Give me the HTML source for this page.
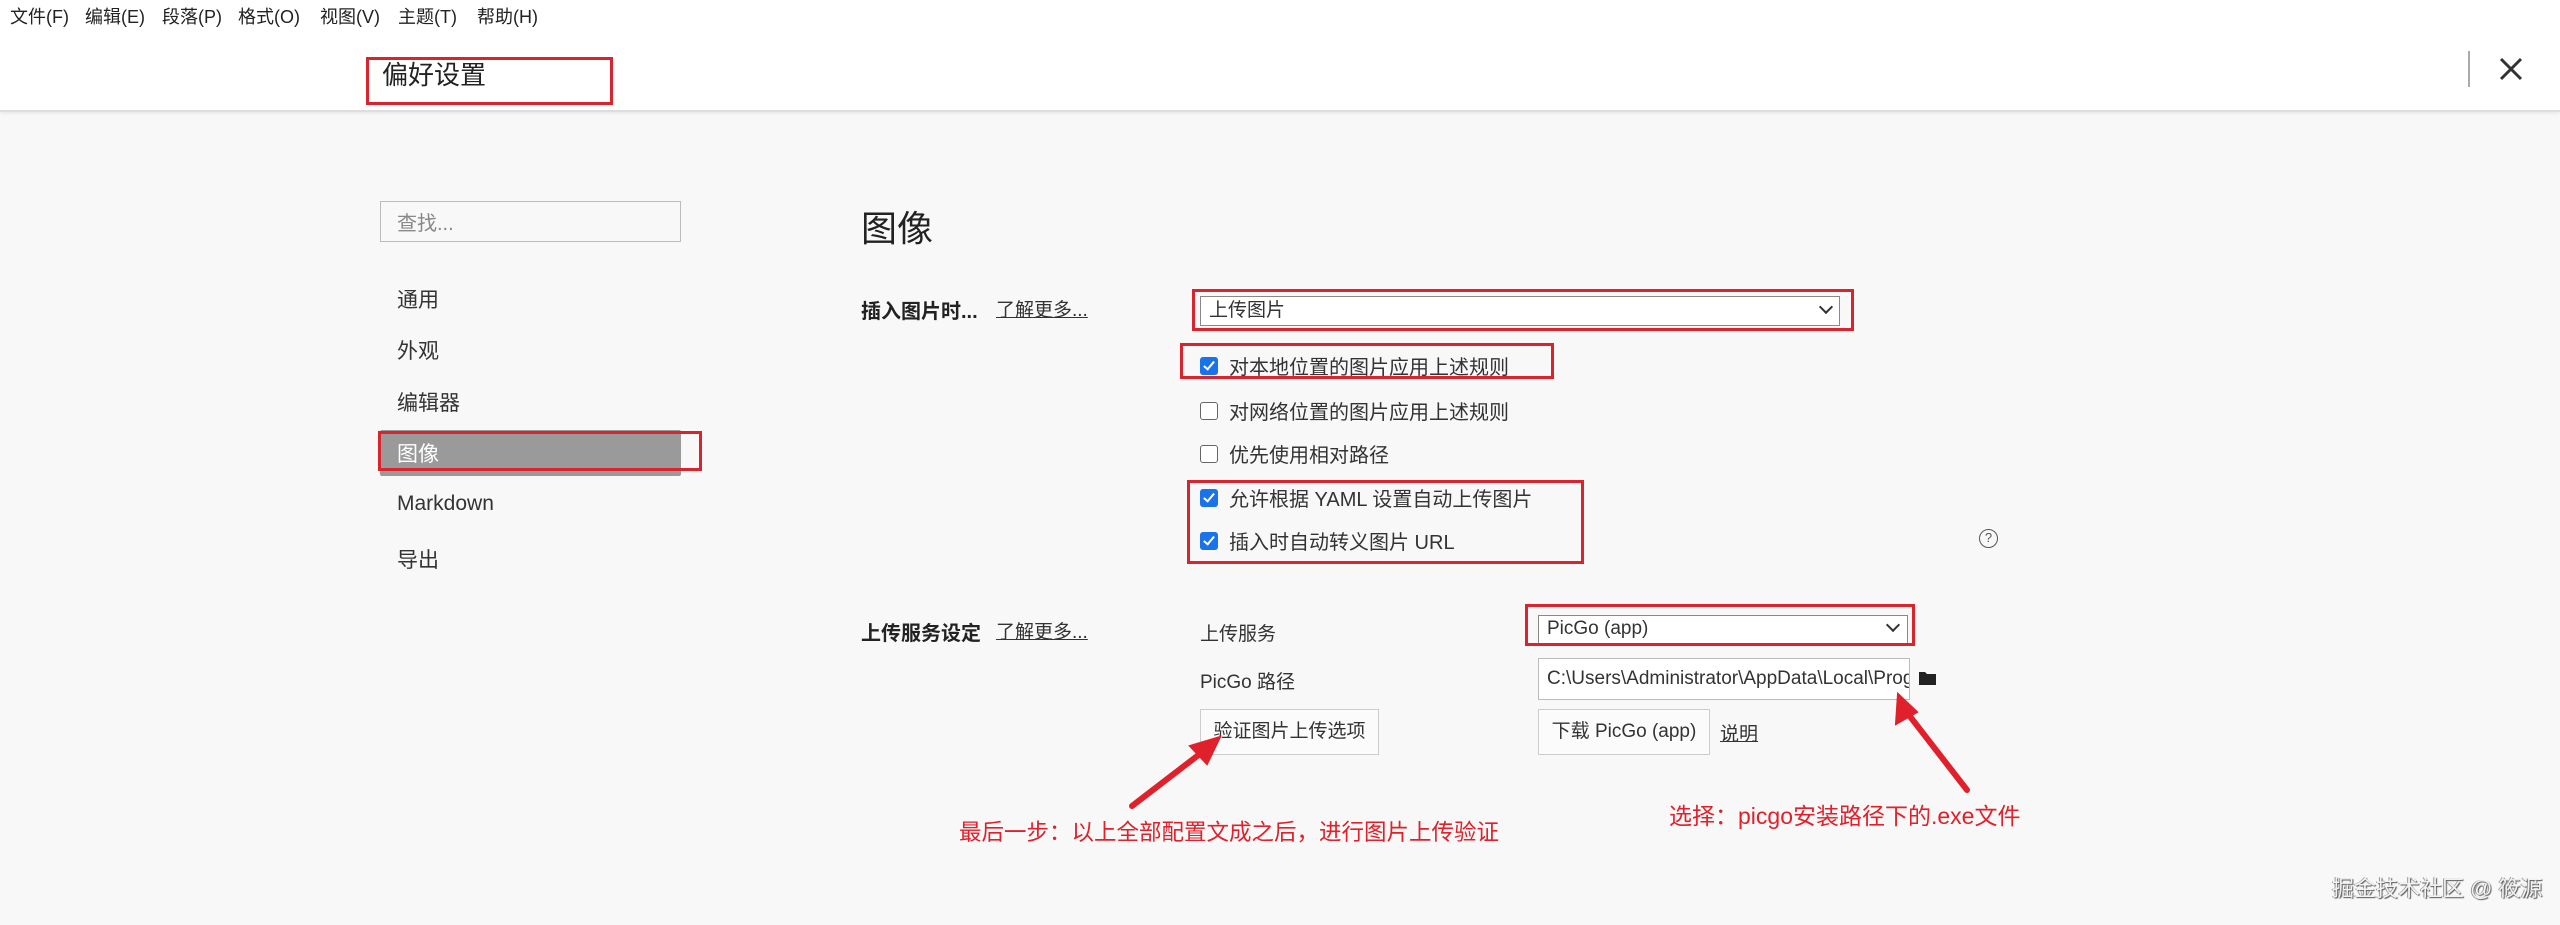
<!DOCTYPE html>
<html><head><meta charset="utf-8"><style>
*{margin:0;padding:0;box-sizing:border-box}
body{width:2560px;height:925px;overflow:hidden;background:#f8f8f8;font-family:"Liberation Sans","Noto Sans CJK SC",sans-serif;color:#333;position:relative}
.a{position:absolute;white-space:nowrap}
.hdr{position:absolute;left:0;top:0;width:2560px;height:112px;background:#fff;border-bottom:2px solid #ddd;box-shadow:0 2px 3px rgba(0,0,0,.06)}
.menu{font-size:18px;top:3px;color:#222}
.rb{position:absolute;border:3px solid #d9232d}
.nav{font-size:21px;left:397px;color:#333}
.cb{position:absolute;left:1200px;width:18px;height:18px;border-radius:3px}
.on{background:#1a73e8}
.on::after{content:"";position:absolute;left:6px;top:2px;width:4px;height:9px;border:solid #fff;border-width:0 2.5px 2.5px 0;transform:rotate(40deg)}
.off{border:1.5px solid #666;background:#fff}
.ct{font-size:20px;left:1229px}
.sel{position:absolute;background:#fff;border:1.5px solid #888;font-size:19px;padding-left:8px;line-height:28px}
.chev{position:absolute;width:10px;height:10px;border:solid #333;border-width:0 2px 2px 0;transform:rotate(45deg)}
.btn{position:absolute;background:#fbfbfb;border:1.5px solid #ccc;font-size:19px;text-align:center;line-height:43px}
.red{color:#e0202a}
</style></head><body>
<div class="hdr"></div>
<div class="a menu" style="left:10px">文件(F)</div>
<div class="a menu" style="left:85px">编辑(E)</div>
<div class="a menu" style="left:162px">段落(P)</div>
<div class="a menu" style="left:238px">格式(O)</div>
<div class="a menu" style="left:320px">视图(V)</div>
<div class="a menu" style="left:398px">主题(T)</div>
<div class="a menu" style="left:477px">帮助(H)</div>
<div class="a" style="left:382px;top:55px;font-size:26px;color:#222">偏好设置</div>
<div class="rb" style="left:366px;top:57px;width:247px;height:48px"></div>
<div class="a" style="left:2468px;top:51px;width:2px;height:36px;background:#aaa"></div>
<svg class="a" style="left:2499px;top:57px" width="24" height="24" viewBox="0 0 24 24"><path d="M2 2L22 22M22 2L2 22" stroke="#333" stroke-width="3"/></svg>

<div class="a" style="left:380px;top:201px;width:301px;height:41px;border:1.5px solid #bbb;background:#f8f8f8"></div>
<div class="a" style="left:397px;top:207px;font-size:20px;color:#888">查找...</div>
<div class="a nav" style="top:284px">通用</div>
<div class="a nav" style="top:335px">外观</div>
<div class="a nav" style="top:387px">编辑器</div>
<div class="a" style="left:380px;top:430px;width:301px;height:46px;background:#9a9a9a;border-radius:2px"></div>
<div class="a nav" style="top:438px;color:#fff">图像</div>
<div class="rb" style="left:378px;top:431px;width:324px;height:40px"></div>
<div class="a nav" style="top:492px">Markdown</div>
<div class="a nav" style="top:544px">导出</div>

<div class="a" style="left:861px;top:200px;font-size:36px;color:#222">图像</div>
<div class="a" style="left:861px;top:295px;font-size:20px;font-weight:bold;color:#222">插入图片时...</div>
<div class="a" style="left:996px;top:295px;font-size:19px;text-decoration:underline">了解更多...</div>
<div class="sel" style="left:1200px;top:296px;width:640px;height:30px">上传图片</div>
<div class="chev" style="left:1821px;top:302px"></div>
<div class="rb" style="left:1192px;top:289px;width:662px;height:42px"></div>

<div class="cb on" style="top:357px"></div><div class="a ct" style="top:351px">对本地位置的图片应用上述规则</div>
<div class="rb" style="left:1180px;top:343px;width:374px;height:36px"></div>
<div class="cb off" style="top:402px"></div><div class="a ct" style="top:396px">对网络位置的图片应用上述规则</div>
<div class="cb off" style="top:445px"></div><div class="a ct" style="top:439px">优先使用相对路径</div>
<div class="cb on" style="top:489px"></div><div class="a ct" style="top:483px">允许根据 YAML 设置自动上传图片</div>
<div class="cb on" style="top:532px"></div><div class="a ct" style="top:526px">插入时自动转义图片 URL</div>
<div class="rb" style="left:1187px;top:480px;width:397px;height:84px"></div>
<div class="a" style="left:1979px;top:529px;width:19px;height:19px;border:1.5px solid #555;border-radius:50%;font-size:13px;text-align:center;line-height:16px;color:#555">?</div>

<div class="a" style="left:861px;top:617px;font-size:20px;font-weight:bold;color:#222">上传服务设定</div>
<div class="a" style="left:996px;top:617px;font-size:19px;text-decoration:underline">了解更多...</div>
<div class="a" style="left:1200px;top:619px;font-size:19px">上传服务</div>
<div class="sel" style="left:1538px;top:615px;width:370px;height:29px;line-height:26px">PicGo (app)</div>
<div class="chev" style="left:1888px;top:620px"></div>
<div class="rb" style="left:1525px;top:604px;width:390px;height:42px"></div>
<div class="a" style="left:1200px;top:667px;font-size:19px">PicGo 路径</div>
<div class="a" style="left:1538px;top:658px;width:372px;height:42px;background:#fff;border:1.5px solid #bbb;overflow:hidden;font-size:19px;line-height:39px;padding-left:8px">C:\Users\Administrator\AppData\Local\Programs\PicGo\PicGo.exe</div>
<svg class="a" style="left:1919px;top:670px" width="17" height="15" viewBox="0 0 17 15"><path d="M0 2h6l2 2h9v11H0z" fill="#222"/></svg>
<div class="btn" style="left:1200px;top:709px;width:179px;height:46px">验证图片上传选项</div>
<div class="btn" style="left:1538px;top:709px;width:172px;height:46px">下载 PicGo (app)</div>
<div class="a" style="left:1720px;top:719px;font-size:19px;text-decoration:underline">说明</div>

<svg class="a" style="left:0;top:0" width="2560" height="925">
<g stroke="#e0202a" stroke-width="6" stroke-linecap="round" fill="#e0202a">
<line x1="1132" y1="806" x2="1205" y2="750"/>
<polygon points="1220,737 1190,746 1207,764" stroke-width="2"/>
<line x1="1967" y1="790" x2="1905" y2="710"/>
<polygon points="1898,694 1896,724 1917,712" stroke-width="2"/>
</g></svg>
<div class="a red" style="left:959px;top:815px;font-size:22.5px">最后一步：以上全部配置文成之后，进行图片上传验证</div>
<div class="a red" style="left:1669px;top:797px;font-size:23px">选择：picgo安装路径下的.exe文件</div>
<div class="a" style="left:2332px;top:871px;font-size:22px;color:#f2f2f2;text-shadow:1px 1px 1px #555,-1px 0 0 #999">掘金技术社区 @ 筱源</div>
</body></html>
